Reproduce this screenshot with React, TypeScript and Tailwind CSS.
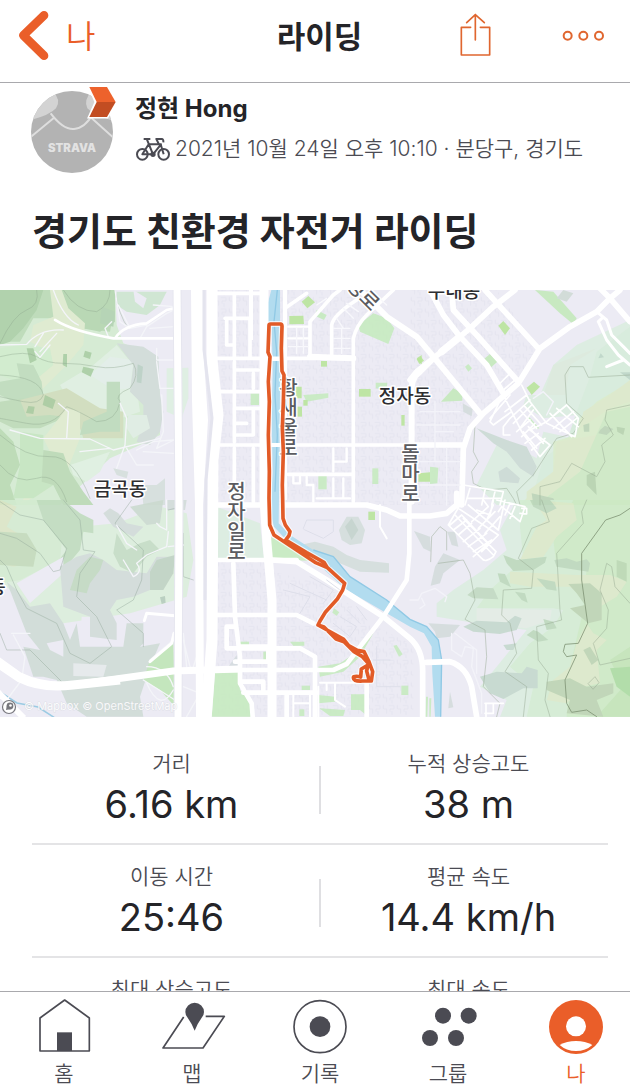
import React from 'react';

type Shape = [string, string];

/* One sheet of the map; its drawing units are a third of a map unit. */
function Sheet({ x, y, children }: { x: number; y: number; children: React.ReactNode }) {
  return <g transform={`translate(${x} ${y}) scale(0.33333)`}>{children}</g>;
}

function Areas({ items }: { items: Shape[] }) {
  return (
    <g opacity="0.88">
      {items.map(([fill, points], i) => (
        <polygon key={i} fill={fill} points={points} />
      ))}
    </g>
  );
}

function Lines({ color, width, items, opacity = 1 }: { color: string; width: number; items: string[]; opacity?: number }) {
  return (
    <g fill="none" stroke={color} strokeWidth={width} strokeLinejoin="round" strokeLinecap="round" opacity={opacity}>
      {items.map((d, i) => (
        <path key={i} d={d} />
      ))}
    </g>
  );
}

const northWest: Shape[] = [
  ['#d3ecd0', '0,15 345,15 350,120 370,175 470,215 480,330 480,450 420,480 330,520 180,660 0,660'],
  ['#b9dbb4', '0,15 330,15 345,60 330,140 240,130 160,100 100,100 60,170 0,170'],
  ['#a9cfa4', '0,15 130,15 110,75 70,130 30,170 0,180'],
  ['#b2d6ad', '185,15 345,15 345,110 300,140 250,130 205,70'],
  ['#deebcd', '150,15 185,15 205,70 255,115 250,180 200,240 140,300 70,370 60,320 120,270 150,200 90,170 100,120 160,95'],
  ['#cfedcb', '60,180 150,190 160,240 100,290 50,290 0,270 0,190'],
  ['#dff0e0', '350,180 280,240 180,300 220,370 330,410 420,380 400,240'],
  ['#e2efe8', '330,215 400,225 390,310 340,315 270,270'],
  ['#bddcb9', '50,235 100,240 125,290 130,340 60,360 0,330 0,290 60,280'],
  ['#bcdab5', '0,350 70,340 90,380 170,370 190,400 120,430 40,430 0,410'],
  ['#cfddb9', '60,345 200,310 300,370 370,380 370,460 250,460 230,400 150,390 80,395'],
  ['#bcdab9', '320,290 360,290 360,440 300,440 240,450 250,410 320,380'],
  ['#d0dcd7', '350,175 430,185 475,215 480,330 490,380 480,440 450,480 410,470 430,410 430,360 390,320 400,240'],
  ['#cde6cf', '350,20 500,20 480,60 440,90 380,80 350,60'],
  ['#ecebf4', '400,15 440,40 430,70 405,50'],
  ['#dfebcd', '200,370 240,380 240,460 200,560 130,620 60,660 150,500 130,460'],
  ['#b8dab0', '0,430 40,470 60,540 30,600 50,660 0,660'],
  ['#c4e6be', '60,440 130,450 130,520 160,600 100,640 40,640 60,540'],
  ['#b9d9b3', '130,495 190,505 210,560 250,620 280,660 190,660 160,600 125,590'],
  ['#dff1e0', '210,540 330,500 300,560 260,590 220,570'],
  ['#dfeee2', '385,390 440,390 450,430 400,460 380,430'],
  ['#a6cd9f', '255,197 275,203 270,222 250,215'],
  ['#a6cd9f', '190,207 201,207 201,247 188,240'],
  ['#a6cd9f', '250,245 282,252 272,275 245,262'],
  ['#a6cd9f', '80,190 100,190 110,225 90,235'],
  ['#a6c99b', '135,330 167,345 158,372 128,360'],
  ['#a6c99b', '85,363 104,365 100,387 78,384'],
  ['#afd1ae', '305,65 345,80 340,125 300,115'],
  ['#b8cfc3', '413,238 429,245 424,295 410,292'],
  ['#def0e1', '500,250 565,248 565,340 545,400 500,380'],
  ['#d5dfdc', '340,550 385,560 380,580 350,570'],
  ['#d5dfdc', '425,600 470,600 495,580 495,660 430,660'],
];

const southWest: Shape[] = [
  ['#dcefdb', '0,0 190,0 240,80 350,70 480,20 560,40 580,180 560,290 390,340 190,370 80,320 0,240'],
  ['#d3ebd0', '0,0 120,0 190,80 180,180 60,240 0,250'],
  ['#dbe6c5', '0,0 50,20 20,80 70,110 80,190 40,200 0,190'],
  ['#c3dbb9', '0,95 80,100 110,150 100,200 0,195'],
  ['#bfdcbd', '110,0 190,0 240,40 280,60 280,100 250,95 240,150 190,210 150,215 200,150 130,60'],
  ['#ecebf4', '50,250 190,170 190,220 90,310'],
  ['#d1dcd8', '180,200 230,170 270,160 310,180 350,210 440,220 470,170 520,170 500,250 450,270 400,290 350,300 330,330 350,370 350,420 270,410 270,350 190,320'],
  ['#c1d9c0', '270,170 310,180 300,210 270,250 260,280 210,270 230,210'],
  ['#c4ddc4', '350,100 380,150 420,130 450,120 480,150 440,170 400,220 360,200 340,160'],
  ['#cfdcd6', '20,245 50,270 90,320 150,310 190,370 210,420 230,370 240,440 370,440 380,370 430,370 430,430 420,440 480,430 450,500 420,590 430,650 260,650 200,610 170,540 130,530 100,530 70,440 120,450 80,400'],
  ['#ecebf4', '140,430 190,420 190,470 150,450'],
  ['#ecebf4', '245,350 270,350 270,425 240,415'],
  ['#e6eaec', '220,490 320,495 310,530 220,528'],
  ['#d1dcd8', '310,40 330,25 355,40 380,70 430,80 400,110 340,80'],
  ['#cbdacf', '390,20 490,0 480,70 440,75'],
  ['#bed3c1', '450,215 470,180 525,165 520,220 490,270 450,270'],
  ['#b4ccba', '480,292 495,288 497,308 485,312'],
  ['#bfe6b6', '450,480 520,425 525,620 480,570 430,540'],
  ['#d1dcd8', '500,0 560,0 555,30 500,30'],
];

const northMid: Shape[] = [
  ['#b8e59a', '268,93 310,92 312,117 268,118'],
  ['#b8e59a', '305,50 325,33 345,52 322,70'],
  ['#c4eabd', '350,75 380,90 372,105 345,92'],
  ['#c6ebbf', '475,120 520,85 560,100 583,130 565,177 480,140'],
  ['#b8e59a', '363,228 381,228 381,245 363,245'],
  ['#b8e59a', '285,305 305,305 305,340 290,340'],
  ['#b8e59a', '477,312 512,312 512,335 477,335'],
  ['#c6ebbf', '527,293 562,293 560,315 527,310'],
  ['#c6ebbf', '310,330 385,325 385,338 320,350'],
  ['#b8e59a', '310,345 323,345 323,362 310,362'],
  ['#b8e59a', '292,365 306,365 306,395 292,395'],
  ['#c6ebbf', '152,325 177,325 177,360 152,360'],
  ['#b8e59a', '604,390 614,390 614,422 604,422'],
  ['#c6ebbf', '355,573 380,573 380,613 355,613'],
  ['#c6ebbf', '517,550 535,550 535,597 517,597'],
  ['#b8e59a', '650,220 665,210 665,240'],
];

const northEast: Shape[] = [
  ['#dceee0', '660,105 500,180 430,240 390,330 350,330 340,360 400,400 500,390 490,460 400,440 380,520 270,460 200,600 260,660 660,660'],
  ['#d6edda', '660,125 560,200 540,275 500,380 470,470 400,520 360,660 660,660'],
  ['#dbeadb', '430,240 560,190 480,240 465,330 400,330'],
  ['#d9edc9', '660,290 560,350 510,400 500,450 430,470 430,560 330,660 660,660'],
  ['#dce9c8', '660,285 600,330 520,380 510,430 600,370 660,350'],
  ['#dce9c8', '440,470 560,450 540,530 440,620 350,660 350,620 430,560'],
  ['#cde9c3', '660,365 590,380 510,560 380,660 660,660'],
  ['#c4e9bb', '375,15 430,20 500,100 490,118 450,85'],
  ['#cfdbd5', '440,40 460,15 490,25 470,50'],
  ['#c4e9bb', '222,222 240,207 262,230 240,250'],
  ['#b8e59a', '265,122 280,108 300,130 285,150'],
  ['#b8e59a', '20,223 33,215 42,227 28,237'],
  ['#c4e9bb', '93,350 130,310 157,325 157,347'],
  ['#b8e59a', '350,308 372,290 390,305 365,330'],
  ['#c6ebbf', '165,245 175,237 186,250 175,260'],
  ['#d3dcdc', '158,355 188,372 185,394 160,380'],
  ['#b8e59a', '25,565 60,562 60,590 25,590'],
  ['#c6ebbf', '60,545 85,548 82,595 60,597'],
  ['#c6ebbf', '347,395 360,398 388,430 378,432'],
  ['#cbdad4', '200,430 290,465 350,485 380,545 370,575 330,550 290,500 250,475'],
  ['#cbdad4', '265,560 290,545 330,580 325,595 270,590'],
  ['#bad4b5', '520,420 538,415 538,440 522,440'],
  ['#bad4b5', '570,435 585,422 610,432 590,450 565,445'],
  ['#b5d2ac', '620,425 645,430 640,450 622,440'],
  ['#b5d2ac', '530,570 555,560 560,630 530,600'],
  ['#bcd6c6', '565,220 572,205 582,217'],
  ['#bcd6c6', '630,262 660,262 660,285'],
  ['#bad4b5', '365,625 430,640 440,660 370,660'],
];

const southEast: Shape[] = [
  ['#dceee0', '320,0 270,90 290,150 220,210 130,270 80,310 80,350 200,370 350,390 260,500 210,560 290,600 270,650 660,650 660,0'],
  ['#d3edd2', '330,0 330,80 340,180 240,270 200,325 430,325 460,330 430,380 360,430 300,500 370,560 350,650 660,650 660,0'],
  ['#e3ede5', '200,325 425,330 420,360 350,385 200,370'],
  ['#cdeac4', '490,0 660,0 660,650 470,650 480,500 520,330 530,200 440,200 430,120'],
  ['#dce9c8', '370,0 490,10 500,60 440,110 400,170 330,180 380,80 410,60'],
  ['#dce9c8', '300,215 500,225 600,225 650,245 620,290 570,320 530,300 480,260 360,260 300,250'],
  ['#dce9c8', '530,370 500,430 480,500 430,540 410,600 470,610 520,560 570,550 560,450 590,420 550,400'],
  ['#c2e5b6', '600,480 660,440 660,650 560,650 640,560'],
  ['#abdca0', '600,505 660,500 660,590 620,560'],
  ['#bcd8bb', '280,165 320,180 410,170 405,188 370,210 310,213 290,190'],
  ['#bcd8bb', '433,180 470,175 500,185 530,178 540,190 535,215 440,200'],
  ['#bcd8bb', '263,220 285,222 303,262 270,245'],
  ['#bcd8bb', '380,235 435,245 440,272 410,268'],
  ['#bcd4b1', '475,252 540,250 575,280 575,360 535,370 480,325 525,315 500,280'],
  ['#c0d9c0', '172,285 200,262 250,265 265,298 190,295'],
  ['#bcd8bb', '315,275 345,280 353,308 335,300'],
  ['#c4d8cd', '160,380 200,362 290,367 315,347 335,355 320,390 270,402 190,395'],
  ['#bcd8bb', '350,405 370,390 385,395 415,420 385,425'],
  ['#bcd8bb', '400,357 430,365 440,385 410,390'],
  ['#c4d8cd', '280,435 320,430 310,450 290,450'],
  ['#c4d8cd', '210,530 260,515 335,520 350,500 383,510 383,565 340,565 280,597 240,580'],
  ['#bcd4b1', '410,545 480,535 530,560 610,550 610,580 560,600 580,650 470,640 480,600 410,570'],
  ['#bcd4b1', '520,450 540,440 565,480 545,495'],
  ['#b9d8b0', '620,180 650,190 650,245 620,230'],
  ['#bcd8bb', '360,0 420,0 440,25 410,40 370,20'],
  ['#d3dcdc', '12,93 60,110 62,155 40,145'],
  ['#d3dcdc', '100,160 150,180 100,220 90,250 62,257 75,200'],
  ['#d3dcdc', '55,370 150,375 120,410 80,415 75,395'],
  ['#d3dcdc', '112,95 135,95 145,140 125,135'],
  ['#d3dcdc', '120,575 130,622 115,625'],
  ['#c6ebbf', '48,590 54,590 52,650 46,650'],
  ['#c6ebbf', '58,595 64,595 62,650 58,650'],
];

const southMid: Shape[] = [
  ['#dceee0', '50,20 180,70 190,160 200,180 50,180'],
  ['#c6ebbf', '212,110 260,135 320,170 330,182 215,180'],
  ['#c6ebbf', '45,517 115,515 120,570 148,600 155,650 35,650'],
  ['#c6ebbf', '120,425 147,425 147,440 120,440'],
  ['#c6ebbf', '270,425 313,425 313,437 280,437'],
  ['#c6ebbf', '190,455 206,455 206,487 190,487'],
  ['#c6ebbf', '305,557 330,557 330,570 305,570'],
  ['#c6ebbf', '298,628 313,628 313,648 298,648'],
  ['#c6ebbf', '355,500 420,490 465,460 510,400 520,400 480,470 430,515 360,530'],
  ['#c6ebbf', '453,583 502,583 502,648 480,630 453,630'],
  ['#c6ebbf', '355,585 405,590 405,605 355,610'],
  ['#c6ebbf', '358,625 435,630 430,648 390,648'],
  ['#c6ebbf', '604,557 625,557 625,585 604,585'],
  ['#c6ebbf', '580,437 590,435 608,463 597,470'],
  ['#c6ebbf', '402,325 418,337 410,347 397,338'],
  ['#b8e59a', '505,35 525,35 525,60 505,60'],
  ['#d3dedb', '300,135 345,125 400,140 440,165 480,180 567,190 567,218 480,215 420,190 360,160'],
  ['#d3dedb', '417,90 440,50 475,50 495,90 485,130 450,135 425,120'],
  ['#c3d3cc', '435,80 455,55 475,90 455,120'],
  ['#d5dcdf', '85,500 110,465 115,500'],
];

const routePath =
  'M209 118Q209 117 212 117L242 117Q246 118 246 124L244 190L246 258L252 270L250 350L247 430L250 500L247 600L248 640L249 700L256 720L270 740L267 752L257 765L320 803L372 832L382 848L434 895L428 915L412 942L376 982L360 1008L354 1020L430 1062L446 1082L472 1096L492 1100L506 1128L518 1160L514 1188L488 1188Q456 1190 461 1175Q470 1172 482 1176L484 1152L504 1140L500 1158L508 1188M354 1020L372 1026L408 1062L432 1070L462 1100L486 1114L504 1134M382 848L345 832L222 750L209 720L207 640L208 560L205 450L208 350L205 290L210 215L204 202L207 121Q207 117 212 117';

function RideMap() {
  return (
    <svg viewBox="0 290 630 427" className="block w-full" role="img" aria-label="금곡동 정자동">
      <defs>
        <pattern id="blocks" width="42" height="34" patternUnits="userSpaceOnUse">
          <path d="M4 2v12h10v14M20 4h16v10H24v8M30 20v12" fill="none" stroke="#e2e2ed" strokeWidth="2" />
        </pattern>
      </defs>
      <rect x="0" y="290" width="630" height="427" fill="#ecebf4" />

      <Sheet x={200} y={285}>
        <polygon points="50,15 480,15 660,170 660,660 50,660" fill="url(#blocks)" />
        <polygon points="50,700 220,820 210,1290 50,1290" fill="url(#blocks)" />
        <polygon points="220,860 380,900 520,1020 640,1080 640,1290 220,1290" fill="url(#blocks)" />
      </Sheet>
      <Sheet x={410} y={285}>
        <polygon points="0,15 260,15 385,190 330,290 220,380 160,480 160,660 0,660" fill="url(#blocks)" />
      </Sheet>

      <Sheet x={0} y={285}><Areas items={northWest} /></Sheet>
      <Sheet x={0} y={500}><Areas items={southWest} /></Sheet>
      <Sheet x={200} y={285}><Areas items={northMid} /></Sheet>
      <Sheet x={410} y={285}><Areas items={northEast} /></Sheet>
      <Sheet x={410} y={500}><Areas items={southEast} /></Sheet>
      <Sheet x={200} y={500}><Areas items={southMid} /></Sheet>

      {/* contour lines */}
      <Sheet x={0} y={285}>
        <Lines color="#8fa890" width={2} opacity={0.6} items={[
          'M110 15Q120 60 80 75T0 175',
          'M190 15Q230 80 290 80Q330 60 330 15',
          'M0 215Q80 195 110 215T190 235T290 245T400 235Q420 270 390 310Q340 330 360 350Q350 410 290 410Q240 380 200 365Q160 430 80 415T0 400',
          'M0 270Q120 275 130 330Q120 360 70 350T0 335',
          'M0 450Q80 520 150 515T270 640',
          'M0 540Q50 600 110 580T200 650',
          'M345 15Q355 90 385 130',
        ]} />
      </Sheet>
      <Sheet x={0} y={500}>
        <Lines color="#93a79a" width={2} opacity={0.65} items={[
          'M0 5L60 45L130 60L200 145L180 210L160 215L120 160L50 115L0 100',
          'M190 0L240 60L250 150L285 155L240 220L230 290L290 350L335 440L270 490L210 460L170 370L80 325L50 270L20 200L0 180',
          'M395 0L345 70L430 150L425 240L400 300L350 330L430 400L430 440',
          'M0 400L20 450L90 450L150 510L200 560',
          'M545 20L505 30M550 100V230L580 240',
        ]} />
      </Sheet>
      <Sheet x={410} y={285}>
        <Lines color="#96a891" width={2} opacity={0.7} items={[
          'M660 270L535 277L520 245L480 245L465 270L470 355L520 400L490 445L440 460L370 570L320 620L330 660',
          'M660 360L590 375L585 405L610 450L575 480L585 530L560 575L485 535L450 590L390 605L390 660',
          'M195 420L190 500L205 530L185 560L190 595L230 615L290 610L310 640L320 660',
        ]} />
      </Sheet>
      <Sheet x={410} y={500}>
        <Lines color="#96a891" width={2} opacity={0.7} items={[
          'M395 0L418 65L365 85L325 175L370 210L365 265L280 270L275 345L300 370L320 460L285 515L350 560L340 650',
          'M530 0L515 35L520 70L440 160L450 330L455 360L380 380L385 480L415 520L405 600L420 650',
          'M62 185L65 110L90 80L110 95L110 150M85 190L160 180L180 220L195 300L165 358L225 390L230 470L220 560L270 610L260 650',
          'M660 310L615 260L605 200L590 190L570 270L595 330L590 385L550 430L570 495L660 475',
          'M535 550L555 530L567 548L550 567Z',
        ]} />
        <Lines color="#7e9273" width={3} opacity={0.8} items={[
          'M660 25L630 45L587 60L515 160L515 240L533 370L505 430L465 433L460 455L470 470L500 465L465 540L470 610L485 637L530 630L560 650',
        ]} />
      </Sheet>

      {/* river */}
      <Sheet x={200} y={285}>
        <path d="M232 0L214 15L202 60L202 110L215 120L218 260L215 400L218 560L213 645L213 690L222 725L250 755L340 825L440 915L560 985L630 1025L672 1045L695 1085L697 1165L705 1295H722L725 1125L715 1065L680 1025L630 1003L560 945L450 875L400 815L340 795L270 750L236 715L238 560L240 300L240 15Z" fill="#b2dcef" />
        <path d="M232 15L222 110L230 200L225 330L232 450L225 620M340 795L400 815L450 875L560 945L630 1003L680 1025L715 1065L725 1125L722 1295" fill="none" stroke="#90c9e5" strokeWidth="4" />
      </Sheet>
      <path d="M0 692L17 703L38 707L55 718" fill="none" stroke="#9bcbe3" strokeWidth="1.5" />

      {/* side streets */}
      <Sheet x={0} y={285}>
        <Lines color="#f4f5f9" width={4} items={[
          'M0 180L80 178Q120 130 190 135M105 185L130 145M120 200L170 145M105 200L120 217L150 180',
          'M160 15Q190 100 235 120M345 15L360 110L390 130L440 120M420 160L440 125L500 85L522 75M450 130L522 125M460 60L522 65M355 60L390 130',
          'M30 435L120 460L270 462L340 495L480 460M200 460L205 380L175 355M360 355L380 400L375 480L350 550M240 500L330 490M380 490L410 540L460 540M430 500L520 505M410 495L460 470L520 465',
          'M470 190L470 225H522M470 230L480 310H522M485 330L490 440L470 490L522 465M325 155L315 130L335 110',
        ]} />
        <Lines color="#ffffff" width={8} items={['M165 105Q220 140 340 160H522M345 160Q370 120 440 115L500 75L522 70']} />
      </Sheet>
      <Sheet x={0} y={500}>
        <Lines color="#f4f5f9" width={4} items={[
          'M500 0V90L480 80L470 70M505 95L500 140L440 165L410 190Q430 215 400 230L370 180M350 75L380 130L410 150M505 140L550 135',
          'M35 400H90M40 405L75 470L65 540L20 600M520 420L450 480M440 500Q500 500 520 560M440 550Q480 640 520 570M430 540L525 600L545 640',
          'M550 420L570 500L600 520M550 560L600 580L560 650M560 500L550 400M580 500L600 440',
        ]} />
        <Lines color="#ffffff" width={9} items={['M433 362L440 340L525 347M522 400L515 430L450 485']} />
      </Sheet>

      {/* main streets */}
      <Sheet x={200} y={285}>
        <Lines color="#ffffff" width={11} items={[
          'M50 25H185M103 25V220M50 220H460M75 100H150V215M80 100V180H100M103 230V470M103 255H175M160 265V310M50 320H180M110 370H180M160 370V450H110M110 415H140M45 480H660M103 490V650M160 490V650',
          'M330 215V110L400 30L420 15M395 215V120Q400 90 470 45M460 650V160Q470 120 500 90L580 15M255 70L320 25M265 568H460',
        ]} />
        <Lines color="#ffffff" width={7} items={[
          'M265 125H325M265 160H325M400 490V560M400 530H440V490',
          'M280 575V595H300V575M320 575V595M320 600H340V650M400 580V640M430 580V640M350 640H450',
        ]} />
        <Lines color="#f8f8fc" width={4} items={['M400 130H450M400 160H450M400 190H450M430 70L460 100M410 100L430 130M290 130V205M310 130V205M425 130V205M265 185H325M440 55L475 80M350 60L380 40M510 15L560 60']} />
        <Lines color="#ffffff" width={18} items={['M480 15L560 95L650 155L700 215L840 385', 'M635 480V330Q630 280 660 260L700 220', 'M330 215L460 220', 'M635 480V650']} />
      </Sheet>
      <Sheet x={410} y={285}>
        <Lines color="#ffffff" width={17} items={[
          'M315 15L250 65L180 130L95 200L20 260L0 285',
          'M60 15L100 90L150 155L230 240L280 325M125 15L130 75L200 150L325 290M225 15L385 190M0 480H155M155 660L160 490L180 430L220 385L325 295L390 190L480 125L560 80L600 40L630 15M560 0L600 40L660 110',
        ]} />
        <Lines color="#ffffff" width={22} items={['M95 200L150 155']} />
        <Lines color="#ffffff" width={9} items={['M560 80L590 105L605 150L640 185L660 205M565 110L590 165L625 210L660 240M565 110L578 98M590 245L640 225']} />
        <Lines color="#ffffff" width={5} items={[
          'M280 330L335 440L390 515L420 480L360 435M335 300L360 350L410 415L495 455L505 400L470 360L410 410L360 435M280 325L240 410L250 420L305 380M265 300L300 265M280 315L315 285M300 330L240 400M350 330L285 380M360 345L300 400M365 360L310 415M370 375L330 430M330 375L380 430M345 365L395 420M320 440L360 405M335 455L375 415M345 475L385 445M365 495L405 460M340 440L380 490M355 425L400 475M300 400L280 425L280 450L300 450M420 385L485 455M440 370L505 425M410 410L450 375M430 430L490 380M450 440L500 400',
          'M160 600L280 620L270 660M180 610L165 660M225 615L215 660M255 620L245 660M175 640H275',
        ]} />
        <Lines color="#f3f3f9" width={4} items={['M370 340L400 320L430 350L410 390M30 380H150M75 350V530M20 420H150M20 530H150M75 440H130M110 490V660M30 600H150']} />
      </Sheet>
      <Sheet x={410} y={500}>
        <Lines color="#ffffff" width={5} items={[
          'M150 15L115 75L215 175Q225 190 250 170L258 155L160 55M135 45L250 165M120 75L155 45L235 130L190 170M145 25L265 105L215 155M175 15L265 90L285 0M130 90L170 60M145 105L185 70M160 125L210 85M175 140L230 100M190 155L245 120M200 30L240 45L250 0M230 60L250 15M185 65L235 20L220 0M205 85L255 35M225 100L270 50M265 35L275 20L330 65L345 20L260 0M285 45L300 10M300 55L315 20M330 40L350 42L350 25L335 25',
          'M225 610H280M228 610V650M250 610V640H225',
        ]} />
        <Lines color="#f3f3f9" width={4} items={['M0 300L25 300L35 280L75 265L110 290L105 305M30 325L45 315L35 295M125 400V450L155 470L165 440L190 445L185 500L215 580V640M135 400L200 450L200 520']} />
      </Sheet>
      <Sheet x={200} y={500}>
        <Lines color="#ffffff" width={14} items={[
          'M100 190L105 350L120 470L120 550L155 610L158 650M105 380H80V445H300L345 470V650M105 485H205V445M120 545H190V575M130 578H350M260 578V650M120 440H205',
          'M50 180H290M50 345H290L340 370M0 510H400L440 492L550 350L620 240L628 160V0M500 550V650',
        ]} />
        <Lines color="#ffffff" width={17} items={[
          'M50 15H185M250 15H500L560 30L600 48H690L740 40L770 15V-20M215 180L290 185L380 240L550 350L630 415Q670 450 668 520V650M680 487L750 485Q800 500 815 560L830 650',
        ]} />
        <Lines color="#ffffff" width={6} items={['M280 578V650M330 578V650M280 610H330M360 548H480M405 550V600L435 620M380 550V570M540 15V80L560 115M250 30L255 80L270 95M355 560V650']} />
        <Lines color="#dedfea" width={3} items={['M310 85L320 60H400V95L370 115L315 90ZM250 270L330 290L300 340M270 250L380 300M400 370L450 410L470 380L420 350M440 330L480 370M470 320L500 360M330 230L400 270L370 310M530 440V560H600M520 480H570M380 240L420 270']} />
      </Sheet>

      {/* trunk roads */}
      <path d="M177 285L179 505L178 720" fill="none" stroke="#e6e6ef" strokeWidth="9" />
      <path d="M177 285L179 505L178 720" fill="none" stroke="#fff" strokeWidth="7" />
      <polygon points="191,290 203,290 203,345 208,420 203,505 204,717 196,717 195,505 192,400" fill="#fff" />
      <path d="M212 285V360L218 415L213 460L212 640L206 720" fill="none" stroke="#fff" strokeWidth="11" />
      <path d="M204 290V350L212 418L206 480L205 600" fill="none" stroke="#e4e4ee" strokeWidth="3" />
      <path d="M264 285V500L267 543L272 600V720" fill="none" stroke="#fff" strokeWidth="9" />
      <path d="M251 290V340M285 290V500" fill="none" stroke="#fff" strokeWidth="4" />
      <path d="M-4 659L20 676Q42 687 73 685L173 671L240 669" fill="none" stroke="#fff" strokeWidth="7" />
      <path d="M-4 662L20 678Q42 689 73 685L120 680" fill="none" stroke="#fff" strokeWidth="9" />
      <path d="M-2 692L24 718" fill="none" stroke="#fff" strokeWidth="6" />
      <path d="M268 359H285M268 445H285" fill="none" stroke="#fff" strokeWidth="4" />

      {/* place and road names */}
      <g
        fontFamily="Inter, 'Noto Sans CJK KR', sans-serif"
        stroke="#ffffff"
        strokeWidth="3"
        strokeLinejoin="round"
        paintOrder="stroke"
      >
        <g fill="#2e2e31" fontSize="19" fontWeight="500" textAnchor="middle">
          <text x="120" y="496">금곡동</text>
          <text x="405" y="403">정자동</text>
          <text x="454" y="298">수내동</text>
          <text x="-3" y="594">동</text>
        </g>
        <g fill="#5b5b60" fontSize="20" fontWeight="500">
          <text x="235" y="481" writingMode="vertical-rl">정자일로</text>
          <text x="409" y="443" writingMode="vertical-rl">돌마로</text>
          <text x="287" y="377" writingMode="vertical-rl">황새울로</text>
          <text transform="translate(345 286) rotate(45)">성로</text>
        </g>
      </g>

      <Sheet x={200} y={285}>
        <path d={routePath} fill="none" stroke="#ffffff" strokeWidth="18" strokeLinejoin="round" strokeLinecap="round" opacity="0.75" />
        <path d={routePath} fill="none" stroke="#e25b27" strokeWidth="11" strokeLinejoin="round" strokeLinecap="round" />
      </Sheet>

      <circle cx="9" cy="707" r="6.5" fill="#fff" stroke="#77777d" strokeWidth="1.2" />
      <circle cx="10" cy="706" r="3.4" fill="#77777d" />
      <path d="M6 710L7 705L11 709Z" fill="#77777d" />
      <circle cx="10.5" cy="705.5" r="1.3" fill="#fff" />
      <text x="24" y="710" fontFamily="Inter, sans-serif" fontSize="11" fill="#ffffff" stroke="#cfd3d8" strokeWidth="0.6" paintOrder="stroke" opacity="0.85">
        © Mapbox © OpenStreetMap
      </text>
    </svg>
  );
}

function Avatar() {
  return (
    <div className="relative h-[82px] w-[82px] shrink-0">
      <svg viewBox="93 273 246 246" className="block h-full w-full" aria-hidden="true">
        <defs>
          <clipPath id="disc"><circle cx="216" cy="396" r="123" /></clipPath>
        </defs>
        <g clipPath="url(#disc)">
          <rect x="93" y="273" width="246" height="246" fill="#b3b3b3" />
          <path d="M158 273Q185 300 168 325Q150 345 93 360V273ZM275 273Q250 300 262 325Q280 345 339 362V273Z" fill="#d3d3d3" />
          <path d="M152 340Q190 390 222 387Q255 385 280 340M93 410L164 352M339 412L272 352" fill="none" stroke="#dedede" strokeWidth="6" />
          <text x="216" y="457" textAnchor="middle" fontFamily="Inter, sans-serif" fontWeight="900" fontSize="34" fill="#e2e2e2">STRAVA</text>
        </g>
      </svg>
      <svg viewBox="258 255 96 102" className="absolute -top-[6px] left-[55px] h-[34px] w-[32px]" aria-hidden="true">
        <path d="M268 261H321L347 306L321 351H268L288 306Z" fill="#fff" stroke="#fff" strokeWidth="9" />
        <path d="M268 261H321L347 306H290Z" fill="#ed622c" />
        <path d="M290 306H347L321 351H268Z" fill="#c24d22" />
      </svg>
    </div>
  );
}

function BikeIcon() {
  return (
    <svg viewBox="402 415 108 81" className="h-[27px] w-9 shrink-0" fill="none" stroke="#4b4b53" strokeWidth="6" strokeLinejoin="round" aria-hidden="true">
      <circle cx="424" cy="470" r="16" />
      <circle cx="488" cy="470" r="16" />
      <path d="M428 424H448M438 426L456 470H424L443 440H480L456 470M474 440L466 424H482Q488 424 487 434M479 440L488 470" />
      <circle cx="456" cy="470" r="5" fill="#4b4b53" />
    </svg>
  );
}

const stats = [
  [{ label: '거리', value: '6.16 km' }, { label: '누적 상승고도', value: '38 m' }],
  [{ label: '이동 시간', value: '25:46' }, { label: '평균 속도', value: '14.4 km/h' }],
  [{ label: '최대 상승고도', value: '63 m' }, { label: '최대 속도', value: '27.0 km/h' }],
];

function Stat({ label, value }: { label: string; value: string }) {
  return (
    <div className="flex flex-col items-center">
      <dt className="text-[21px] leading-8 font-[350] text-[#4b4b53]">{label}</dt>
      <dd className="text-[38px] leading-[48px] text-[#242428]">{value}</dd>
    </div>
  );
}

const tabs = [
  {
    name: '홈',
    viewBox: '96 84 192 168',
    icon: (
      <g fill="none" stroke="#4b4b53" strokeWidth="5" strokeLinejoin="round">
        <path d="M120 144L194 90L268 144V243H120Z" />
        <rect x="171" y="187" width="45" height="56" fill="#4b4b53" stroke="none" />
      </g>
    ),
  },
  {
    name: '맵',
    viewBox: '480 84 192 168',
    icon: (
      <>
        <path d="M551 141L489 234H609L673 139H617" fill="none" stroke="#4b4b53" strokeWidth="5" strokeLinejoin="round" />
        <path d="M584 182Q575 160 562 142Q556 134 556 126A28 28 0 0 1 612 126Q612 134 606 142Q593 160 584 182Z" fill="#4b4b53" />
      </>
    ),
  },
  {
    name: '기록',
    viewBox: '864 84 192 168',
    icon: (
      <>
        <circle cx="960" cy="170" r="78" fill="none" stroke="#4b4b53" strokeWidth="5" />
        <circle cx="960" cy="170" r="31" fill="#4b4b53" />
      </>
    ),
  },
  {
    name: '그룹',
    viewBox: '303 84 192 168',
    icon: (
      <g fill="#4b4b53">
        <circle cx="384" cy="137" r="24" />
        <circle cx="461" cy="137" r="24" />
        <circle cx="345" cy="204" r="24" />
        <circle cx="423" cy="204" r="24" />
      </g>
    ),
  },
  {
    name: '나',
    viewBox: '687 84 192 168',
    active: true,
    icon: (
      <>
        <circle cx="783" cy="171" r="81" fill="#ea5e29" />
        <circle cx="783" cy="169" r="30" fill="#fff" />
        <path d="M734 225Q755 213 783 213T832 225Q812 243 783 243T734 225Z" fill="#fff" />
      </>
    ),
  },
];

export default function App() {
  return (
    <div className="flex h-screen flex-col overflow-hidden bg-white font-[Inter,'Noto_Sans_CJK_KR',sans-serif] text-[#242428]">
      <header className="grid h-[83px] shrink-0 grid-cols-[1fr_auto_1fr] items-center border-b border-[#a9a9ad] pr-[9px] pb-3 pl-[18px]">
        <a href="#me" className="flex items-center gap-4 text-[32px] leading-10 font-[350] text-[#ea5e29]">
          <svg viewBox="54 30 96 153" className="h-[51px] w-8" fill="none" stroke="#ea5e29" strokeWidth="26" strokeLinecap="round" strokeLinejoin="round" aria-hidden="true">
            <path d="M132 46L70 106L132 167" />
          </svg>
          <span className="pt-1">나</span>
        </a>
        <h1 className="pt-1 text-[31px] leading-10 font-bold">라이딩</h1>
        <div className="flex items-center justify-end gap-[54px]">
          <button type="button" aria-label="공유">
            <svg viewBox="432 36 99 138" className="h-[46px] w-[33px]" fill="none" stroke="#e0662f" strokeWidth="5" strokeLinejoin="round" strokeLinecap="round" aria-hidden="true">
              <path d="M467 82H439V165H524V82H496M481 120V44M455 68L481 44L508 68" />
            </svg>
          </button>
          <button type="button" aria-label="더보기" className="px-4">
            <svg viewBox="741 90 129 33" className="h-[11px] w-[43px]" fill="none" stroke="#e0662f" strokeWidth="6" aria-hidden="true">
              <circle cx="758" cy="107" r="12" />
              <circle cx="805" cy="107" r="12" />
              <circle cx="852" cy="107" r="12" />
            </svg>
          </button>
        </div>
      </header>

      <main className="min-h-0 flex-1 overflow-y-auto [scrollbar-width:none]">
        <section className="flex gap-[22px] px-[31px] pt-2">
          <Avatar />
          <div className="flex min-w-0 flex-col gap-1">
            <p className="text-2xl leading-9 font-bold">정현 Hong</p>
            <p className="flex items-center gap-1 text-[21px] leading-9 font-[350] whitespace-nowrap text-[#4b4b53]">
              <BikeIcon />
              2021년 10월 24일 오후 10:10 · 분당구, 경기도
            </p>
          </div>
        </section>
        <h2 className="px-8 pt-[30px] pb-[31px] text-[38px] leading-[56px] font-bold">경기도 친환경 자전거 라이딩</h2>

        <RideMap />

        <dl className="pt-[15px] pr-[22px] pl-8">
          {stats.map(([left, right]) => (
            <div key={left.label} className="grid h-[113px] grid-cols-[1fr_2px_1fr] gap-2 border-b-2 border-[#e4e4e6] pt-4">
              <Stat {...left} />
              <div className="mt-[18px] h-12 bg-[#dfdfe2]" />
              <Stat {...right} />
            </div>
          ))}
        </dl>
      </main>

      <nav className="flex h-[99px] shrink-0 justify-between border-t border-[#a9a9ad] bg-white pt-[6px] pr-[22px] pl-8">
        {tabs.map((tab) => (
          <a
            key={tab.name}
            href={`#${tab.name}`}
            className={`flex w-16 flex-col items-center text-[21px] leading-10 font-[350] ${tab.active ? 'text-[#ea5e29]' : 'text-[#4b4b53]'}`}
          >
            <svg viewBox={tab.viewBox} className="h-14 w-16 shrink-0 overflow-visible" aria-hidden="true">
              {tab.icon}
            </svg>
            {tab.name}
          </a>
        ))}
      </nav>
    </div>
  );
}
